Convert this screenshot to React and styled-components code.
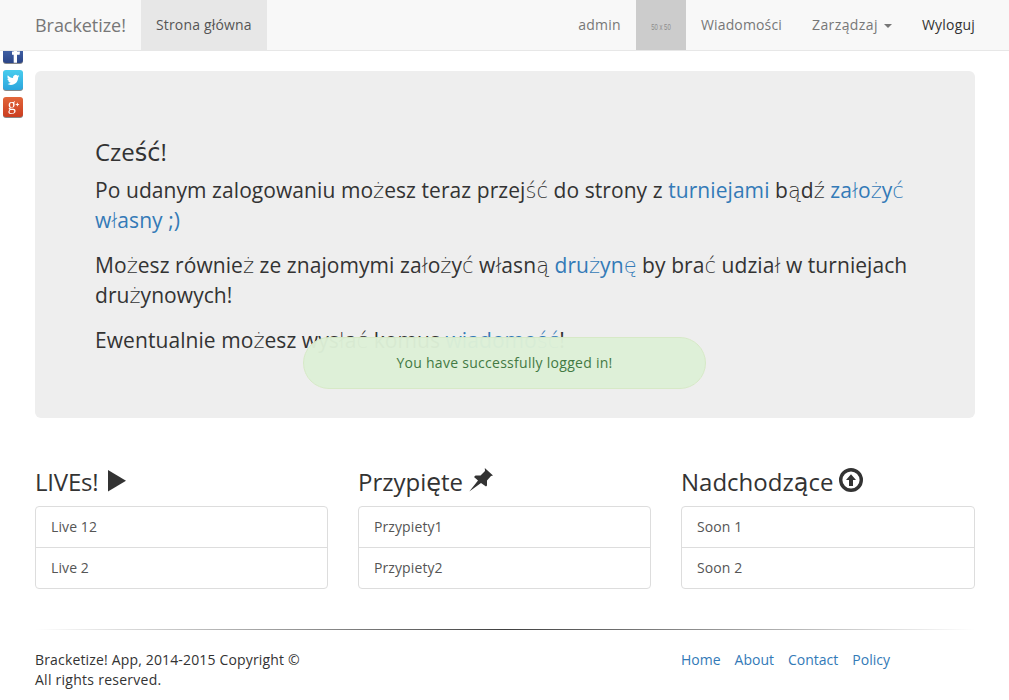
import React from "react";
import styled, { createGlobalStyle } from "styled-components";

const GlobalStyle = createGlobalStyle`
  *, *::before, *::after { box-sizing: border-box; }
  html { overflow: hidden; }
  body {
    margin: 0;
    padding-top: 71px;
    background: #fff;
    color: #333;
    font: 14px/20px "Open Sans", "Noto Sans", sans-serif;
  }
`;

const Container = styled.div`
  width: 970px;
  margin: 0 19px 0 20px;
  padding: 0 15px;
`;

const Navbar = styled.nav`
  position: fixed;
  top: 0;
  left: 0;
  right: 0;
  z-index: 10;
  height: 51px;
  background: #f8f8f8;
  border-bottom: 1px solid #e7e7e7;
`;

const NavInner = styled.div`
  display: flex;
  width: 970px;
  height: 50px;
  margin: 0 19px 0 20px;
`;

const Brand = styled.a`
  width: 121px;
  padding: 15px 0 15px 15px;
  font-size: 18px;
  letter-spacing: -0.05px;
  color: #777;
`;

const NavItem = styled.a`
  display: flex;
  align-items: center;
  padding: 0 15px;
  white-space: nowrap;
  letter-spacing: ${(p) => p.$track || 0}px;
  color: ${(p) => (p.$active ? "#555" : p.$strong ? "#333" : "#777")};
  background: ${(p) => (p.$active ? "#e7e7e7" : "transparent")};
`;

const NavRight = styled.div`
  display: flex;
  margin-left: auto;
`;

const Avatar = styled.div`
  width: 50px;
  height: 50px;
  background: #ccc;
  color: #8c8c8c;
  display: flex;
  align-items: center;
  justify-content: center;
  font: 8.5px/10px "Liberation Sans", sans-serif;
  padding-top: 3px;
  white-space: nowrap;
  span { transform: scaleX(0.7); }
`;

const Caret = styled.span`
  margin: 2px 0 0 6px;
  border-top: 4px solid;
  border-left: 4px solid transparent;
  border-right: 4px solid transparent;
`;

const Social = styled.div`
  position: fixed;
  left: 3px;
  top: 43px;
  display: flex;
  flex-direction: column;
  gap: 6px;
  svg { display: block; }
`;

const Jumbotron = styled.section`
  padding: 48px 60px;
  margin-bottom: 30px;
  border-radius: 6px;
  background: #eee;
  display: flow-root;
`;

const Title = styled.h3`
  margin: 20px 0 10px;
  font-size: 24px;
  font-weight: 400;
  line-height: 26.4px;
`;

const Lead = styled.p`
  margin: 0 0 15px;
  font-size: 21px;
  line-height: 30px;
  letter-spacing: 0.07px;
`;

const LightGlyphs = styled.span`
  font-family: "DejaVu Sans", "DejaVu Sans Light", sans-serif;
  font-weight: 200;
  line-height: 1;
  letter-spacing: 0;
`;

const TitleGlyphs = styled.span`
  font-family: "DejaVu Sans", sans-serif;
  line-height: 1;
`;

const Link = styled.a`
  color: #337ab7;
`;

const Columns = styled.div`
  display: grid;
  grid-template-columns: 293px 293px 1fr;
  column-gap: 30px;
`;

const ColumnTitle = styled(Title)`
  display: flex;
  gap: 6px;
  height: 27px;
  margin: 20px 0 10.5px;
  svg { flex: none; }
`;

const TitleText = styled.span`
  padding-top: 1px;
  letter-spacing: ${(p) => p.$track}px;
`;

const List = styled.div`
  border: 1px solid #ddd;
  border-radius: 4px;
  margin-bottom: 20px;
`;

const ListItem = styled.a`
  display: block;
  padding: 10px 15px;
  color: #555;
  letter-spacing: 0.1px;
  & + & { border-top: 1px solid #ddd; }
`;

const Rule = styled.hr`
  height: 1px;
  margin: 20px 0;
  border: 0;
  background: linear-gradient(to right, transparent, rgba(0, 0, 0, 0.75), transparent);
`;

const Footer = styled.footer`
  display: grid;
  grid-template-columns: 616px 1fr;
  column-gap: 30px;
`;

const Copyright = styled.div`
  letter-spacing: ${(p) => p.$track}px;
`;

const FooterLinks = styled.div`
  display: flex;
  gap: 14px;
`;

const Alert = styled.div`
  position: fixed;
  z-index: 5;
  left: 30%;
  top: 337px;
  width: 40%;
  height: 52px;
  padding: 15px;
  border: 1px solid #d6e9c6;
  border-radius: 26px;
  background: #ddf0d7;
  color: #3c763d;
  text-align: center;
  letter-spacing: 0.28px;
  opacity: 0.97;
`;

/* Polish letters outside Latin-1 get their own glyph style. */
const Mixed = ({ children, as: Glyphs = LightGlyphs }) =>
  children.split(/([ąćęłńśźż]+)/).map((part, i) =>
    i % 2 ? <Glyphs key={i}>{part}</Glyphs> : part
  );

const PlayIcon = () => (
  <svg width="24" height="24" viewBox="0 0 24 24" fill="#333">
    <path d="M4 2v21.500L22 12.800z" />
  </svg>
);

const PinIcon = () => (
  <svg width="26" height="26" viewBox="0 0 26 26" fill="#333">
    <path d="M15.800 0 24 7.500 22 8 18 12.500 18 17.500 17 18.500 12 15 .3 23.500 9 12.500 5 9 6.500 7.500 11.500 7.500 16 3z" />
  </svg>
);

const UpIcon = () => (
  <svg width="24" height="24" viewBox="0 0 24 24">
    <circle cx="12" cy="12" r="10.300" fill="none" stroke="#333" strokeWidth="3.400" />
    <path d="M12 6.200 17 12h-3v6h-4v-6H7z" fill="#333" />
  </svg>
);

const Tile = ({ id, from, to, children }) => (
  <svg width="20" height="21" viewBox="0 0 20 21">
    <defs>
      <linearGradient id={id} x1="0" y1="0" x2="0" y2="1">
        <stop offset="0" stopColor={from} />
        <stop offset="1" stopColor={to} />
      </linearGradient>
    </defs>
    <rect y="1" width="20" height="20" rx="3" fill="#888" />
    <rect width="20" height="20" rx="3" fill={`url(#${id})`} />
    {children}
  </svg>
);

const columns = [
  { title: "LIVEs!", track: -0.2, icon: <PlayIcon />, items: ["Live 12", "Live 2"] },
  { title: "Przypięte", track: 0, icon: <PinIcon />, items: ["Przypiety1", "Przypiety2"] },
  { title: "Nadchodzące", track: 0, icon: <UpIcon />, items: ["Soon 1", "Soon 2"] },
];

export default function App() {
  return (
    <>
      <GlobalStyle />
      <Navbar>
        <NavInner>
          <Brand>Bracketize!</Brand>
          <NavItem $active $track={0.16}>Strona główna</NavItem>
          <NavRight>
            <NavItem $track={0.25}>admin</NavItem>
            <Avatar><span>50 x 50</span></Avatar>
            <NavItem $track={0.15}>Wiadomości</NavItem>
            <NavItem $track={0.41}>Zarządzaj<Caret /></NavItem>
            <NavItem $strong $track={0.2}>Wyloguj</NavItem>
          </NavRight>
        </NavInner>
      </Navbar>
      <Social>
        <Tile id="fb" from="#4b6fb5" to="#2b4587">
          <path d="M10.700 19.700v-8H9V8.500h1.700V7c0-3 1.500-4 4-4H17v3h-1.500c-1 0-1.500.4-1.500 1.500v1h3l-.4 3.200H14v8z" fill="#fff" />
        </Tile>
        <Tile id="tw" from="#48cdee" to="#2ba5dd">
          <path transform="translate(3.900 3.700) scale(.52)" d="M23.950 4.570a10 10 0 0 1-2.820.77 4.960 4.960 0 0 0 2.160-2.720c-.95.550-2 .95-3.120 1.180a4.920 4.920 0 0 0-8.380 4.480C7.690 8.090 4.070 6.130 1.640 3.160a4.920 4.920 0 0 0 1.520 6.570 4.900 4.900 0 0 1-2.230-.61v.06c0 2.380 1.700 4.370 3.950 4.820a5 5 0 0 1-2.210.09 4.940 4.940 0 0 0 4.600 3.420A9.870 9.870 0 0 1 0 19.540a14 14 0 0 0 7.550 2.210c9.050 0 14-7.500 14-13.980 0-.21 0-.42-.02-.63a9.940 9.940 0 0 0 2.420-2.570z" fill="#fff" />
        </Tile>
        <Tile id="gp" from="#e2663a" to="#cb3d20">
          <text x="4.700" y="12.500" fill="#fff" fontFamily="Liberation Serif, serif" fontSize="16">g</text>
          <path d="M12.700 7.500h3.400M14.400 5.800v3.400" stroke="#fff" strokeWidth="0.900" />
        </Tile>
      </Social>
      <Container>
        <Jumbotron>
          <Title><Mixed as={TitleGlyphs}>Cześć!</Mixed></Title>
          <Lead>
            <Mixed>Po udanym zalogowaniu możesz teraz przejść do strony z </Mixed>
            <Link>turniejami</Link>
            <Mixed> bądź </Mixed>
            <Link><Mixed>założyć własny ;)</Mixed></Link>
          </Lead>
          <Lead>
            <Mixed>Możesz również ze znajomymi założyć własną </Mixed>
            <Link><Mixed>drużynę</Mixed></Link>
            <Mixed> by brać udział w turniejach drużynowych!</Mixed>
          </Lead>
          <Lead>
            <Mixed>Ewentualnie możesz wysłać komus </Mixed>
            <Link><Mixed>wiadomość</Mixed></Link>!
          </Lead>
        </Jumbotron>
        <Columns>
          {columns.map((c) => (
            <section key={c.title}>
              <ColumnTitle>
                <TitleText $track={c.track}><Mixed as={TitleGlyphs}>{c.title}</Mixed></TitleText>
                {c.icon}
              </ColumnTitle>
              <List>
                {c.items.map((t) => <ListItem key={t}>{t}</ListItem>)}
              </List>
            </section>
          ))}
        </Columns>
        <Rule />
        <Footer>
          <div>
            <Copyright $track={0.16}>Bracketize! App, 2014-2015 Copyright ©</Copyright>
            <Copyright $track={0.26}>All rights reserved.</Copyright>
          </div>
          <FooterLinks>
            <Link>Home</Link>
            <Link>About</Link>
            <Link>Contact</Link>
            <Link>Policy</Link>
          </FooterLinks>
        </Footer>
      </Container>
      <Alert>You have successfully logged in!</Alert>
    </>
  );
}
